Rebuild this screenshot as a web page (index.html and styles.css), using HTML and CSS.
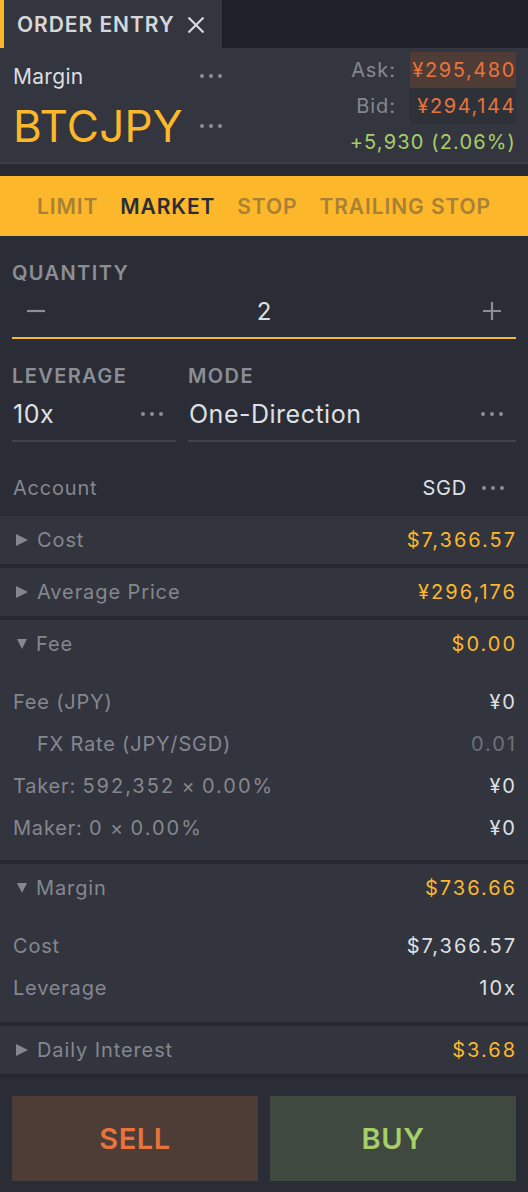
FILE: index.html
```html
<!DOCTYPE html>
<html lang="en">
<head>
<meta charset="utf-8">
<title>Order Entry</title>
<link rel="stylesheet" href="styles.css">
</head>
<body>
<div class="app">
  <div class="tabbar">
    <div class="tab">
      <span class="tab-title">ORDER ENTRY</span>
      <svg class="tab-close" width="18" height="16" viewBox="0 0 18 16"><path d="M1.5 0.5 L16.5 15.5 M16.5 0.5 L1.5 15.5" stroke="#d6d7db" stroke-width="2.2" fill="none"/></svg>
    </div>
  </div>

  <header class="header">
    <div class="hleft">
      <div class="hrow hrow-type"><span class="mtype">Margin</span><span class="dots"><i></i><i></i><i></i></span></div>
      <div class="hrow hrow-sym"><span class="sym">BTCJPY</span><span class="dots"><i></i><i></i><i></i></span></div>
    </div>
    <div class="quotes">
      <span class="qlabel">Ask:</span><span class="qval ask">¥295,480</span>
      <span class="qlabel">Bid:</span><span class="qval bid">¥294,144</span>
      <span class="qchange">+5,930 (2.06%)</span>
    </div>
  </header>
  <div class="hsep"></div>

  <nav class="types">
    <span class="type">LIMIT</span>
    <span class="type active">MARKET</span>
    <span class="type">STOP</span>
    <span class="type">TRAILING STOP</span>
  </nav>

  <div class="form">
    <div class="field">
      <div class="flabel">QUANTITY</div>
      <div class="qty">
        <svg class="qbtn" width="20" height="20" viewBox="0 0 20 20"><path d="M1 10 H19" stroke="#8c8e95" stroke-width="2.2"/></svg>
        <span class="qnum">2</span>
        <svg class="qbtn" width="20" height="20" viewBox="0 0 20 20"><path d="M1 10 H19 M10 1 V19" stroke="#8c8e95" stroke-width="2.2"/></svg>
      </div>
    </div>
    <div class="pair">
      <div class="field lev">
        <div class="flabel">LEVERAGE</div>
        <div class="select"><span class="sval">10x</span><span class="dots"><i></i><i></i><i></i></span></div>
      </div>
      <div class="field mode">
        <div class="flabel">MODE</div>
        <div class="select"><span class="sval">One-Direction</span><span class="dots"><i></i><i></i><i></i></span></div>
      </div>
    </div>
  </div>

  <div class="account">
    <span class="alabel">Account</span>
    <span class="aval"><span>SGD</span><span class="dots"><i></i><i></i><i></i></span></span>
  </div>

  <div class="sections">
    <div class="sec">
      <div class="sec-head"><span class="tri right"></span><span class="sname">Cost</span><span class="sval-y">$7,366.57</span></div>
    </div>
    <div class="sec">
      <div class="sec-head"><span class="tri right"></span><span class="sname">Average Price</span><span class="sval-y">¥296,176</span></div>
    </div>
    <div class="sec open fee">
      <div class="sec-head"><span class="tri down"></span><span class="sname">Fee</span><span class="sval-y">$0.00</span></div>
      <div class="sub">
        <div class="srow"><span>Fee (JPY)</span><span class="v">¥0</span></div>
        <div class="srow indent"><span>FX Rate (JPY/SGD)</span><span class="v dim">0.01</span></div>
        <div class="srow"><span>Taker: <span class="n">592,352</span> × <span class="n">0.00%</span></span><span class="v">¥0</span></div>
        <div class="srow"><span>Maker: <span class="n">0</span> × <span class="n">0.00%</span></span><span class="v">¥0</span></div>
      </div>
    </div>
    <div class="sec open margin">
      <div class="sec-head"><span class="tri down"></span><span class="sname">Margin</span><span class="sval-y">$736.66</span></div>
      <div class="sub">
        <div class="srow"><span>Cost</span><span class="v">$7,366.57</span></div>
        <div class="srow"><span>Leverage</span><span class="v">10x</span></div>
      </div>
    </div>
    <div class="sec">
      <div class="sec-head"><span class="tri right"></span><span class="sname">Daily Interest</span><span class="sval-y">$3.68</span></div>
    </div>
  </div>

  <div class="actions">
    <button class="btn sell">SELL</button>
    <button class="btn buy">BUY</button>
  </div>
</div>
</body>
</html>
```

FILE: styles.css
```css
* { box-sizing: border-box; }
html, body {
  margin: 0;
  padding: 0;
  background: #2a2d36;
}
body {
  font-family: Inter, "Noto Sans", sans-serif;
  color: #dfe0e3;
  width: 528px;
  height: 1192px;
  overflow: hidden;
}
.app { display: flex; flex-direction: column; }

/* tab bar */
.tabbar {
  height: 48px;
  background: #1f2129;
  display: flex;
}
.tab {
  width: 222px;
  background: #33363f;
  border-left: 4px solid #fdb72a;
  display: flex;
  align-items: center;
  padding-left: 13px;
  gap: 12px;
}
.tab-title {
  font-size: 21px;
  font-weight: 600;
  letter-spacing: 0.95px;
  color: #d6d7db;
}
.tab-close { margin-top: 1px; }

/* header */
.header {
  height: 114px;
  background: #33363f;
  display: flex;
  justify-content: space-between;
  padding: 4px 12px 0 13px;
}
.hleft { width: 209px; display: flex; flex-direction: column; }
.hrow { display: flex; align-items: center; justify-content: space-between; }
.hrow-type { height: 48px; }
.hrow-sym { height: 52px; }
.mtype { font-size: 21px; color: #dcdde0; letter-spacing: 0.3px; }
.sym { font-size: 44px; color: #fdb72a; letter-spacing: 0.2px; }
.dots { display: inline-flex; gap: 5px; align-items: center; }
.dots i {
  display: block;
  width: 4px;
  height: 4px;
  border-radius: 50%;
  background: #8c8e95;
}
.quotes {
  display: grid;
  grid-template-columns: auto auto;
  grid-auto-rows: 36px;
  column-gap: 14px;
  align-items: center;
  align-content: start;
  font-size: 20px;
  letter-spacing: 1.1px;
}
.qlabel { color: #85878e; text-align: right; letter-spacing: 0.9px; }
.qval {
  height: 36px;
  display: flex;
  align-items: center;
  justify-content: flex-end;
  padding: 0 0 0 1px;
  letter-spacing: 1.6px;
  color: #e8743b;
}
.ask { background: #4f3c37; }
.bid { background: #2f3139; }
.qchange {
  grid-column: 1 / span 2;
  text-align: right;
  letter-spacing: 1.15px;
  color: #a6cf6a;
}
.hsep {
  height: 14px;
  border-top: 2px solid #3b3e47;
  background: #282a32;
}

/* order types */
.types {
  height: 60px;
  background: #fdb72a;
  display: flex;
  justify-content: center;
  align-items: center;
  gap: 22px;
  font-size: 21px;
  font-weight: 600;
  letter-spacing: 0.9px;
}
.type { color: #a98135; }
.type.active { color: #2a2d36; }

/* form */
.form { padding: 25px 12px 0; }
.flabel {
  font-size: 20px;
  font-weight: 600;
  letter-spacing: 1.4px;
  color: #8c8e95;
  line-height: 24px;
}
.qty {
  height: 54px;
  display: flex;
  align-items: center;
  justify-content: space-between;
  padding: 0 14px 0 14px;
  border-bottom: 2px solid #fdb72a;
}
.qnum { font-size: 24px; color: #dfe0e3; }
.pair { display: flex; gap: 12px; margin-top: 25px; }
.lev { width: 164px; }
.mode { flex: 1; }
.select {
  height: 54px;
  display: flex;
  align-items: center;
  justify-content: space-between;
  padding: 0 13px 0 1px;
  border-bottom: 2px solid #40434c;
}
.sval { font-size: 25px; color: #dfe0e3; letter-spacing: 0.5px; }

/* account */
.account {
  margin-top: 22px;
  height: 48px;
  padding: 0 24px 0 13px;
  display: flex;
  align-items: center;
  justify-content: space-between;
  font-size: 20px;
  letter-spacing: 0.8px;
}
.alabel { color: #85878e; }
.aval { display: flex; align-items: center; gap: 15px; color: #dfe0e3; }

/* sections */
.sections {
  margin-top: 4px;
  display: flex;
  flex-direction: column;
  gap: 4px;
  background: #26282f;
  padding-bottom: 4px;
}
.sec { background: #32353e; }
.sec-head {
  height: 48px;
  display: flex;
  align-items: center;
  padding: 0 12px 0 16px;
  font-size: 20px;
  letter-spacing: 0.9px;
}
.tri { width: 0; height: 0; margin-right: 9px; }
.tri.right {
  border-top: 6.5px solid transparent;
  border-bottom: 6.5px solid transparent;
  border-left: 12px solid #85878e;
}
.tri.down {
  border-left: 5.5px solid transparent;
  border-right: 5.5px solid transparent;
  border-top: 10px solid #85878e;
  margin-left: 1px;
}
.sname { color: #85878e; flex: 1; }
.sval-y { color: #fdb72a; letter-spacing: 2px; margin-right: -1px; }
.sub { padding: 13px 12px 11px 13px; }
.margin .sub { padding-bottom: 13px; }
.srow {
  height: 42px;
  display: flex;
  align-items: center;
  justify-content: space-between;
  font-size: 20px;
  letter-spacing: 0.8px;
  color: #85878e;
}
.srow .n { letter-spacing: 2px; }
.srow.indent { padding-left: 24px; }
.srow .v { color: #dfe0e3; letter-spacing: 2px; margin-right: -1px; }
.srow .v.dim { color: #6f717a; }

/* actions */
.actions {
  display: flex;
  gap: 12px;
  padding: 18px 12px 0;
}
.btn {
  flex: 1;
  height: 85px;
  border: 0;
  font-family: Inter, "Noto Sans", sans-serif;
  font-size: 29px;
  font-weight: 600;
  letter-spacing: 0.6px;
}
.sell { background: #4e3c37; color: #e8743b; }
.buy { background: #404940; color: #a6cf6a; }
```
